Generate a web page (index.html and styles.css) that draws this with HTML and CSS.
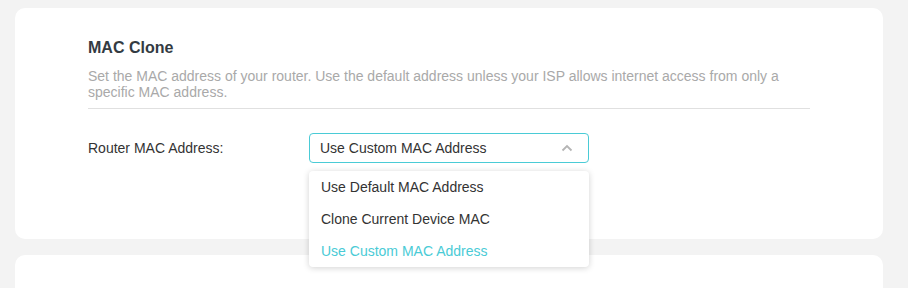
FILE: index.html
```
<!DOCTYPE html>
<html>
<head>
<meta charset="utf-8">
<link rel="stylesheet" href="styles.css">
</head>
<body>
<div class="page">
  <section class="card">
    <h2 class="title">MAC Clone</h2>
    <p class="desc">Set the MAC address of your router. Use the default address unless your ISP allows internet access from only a specific MAC address.</p>
    <div class="row">
      <label class="label">Router MAC Address:</label>
      <div class="select-wrap">
        <div class="select">
          <span>Use Custom MAC Address</span>
          <svg class="chev" width="12" height="8" viewBox="0 0 12 8"><path d="M1.5 6.5 L6 2 L10.5 6.5" fill="none" stroke="#b5b5b5" stroke-width="1.8"/></svg>
        </div>
        <ul class="menu">
          <li>Use Default MAC Address</li>
          <li>Clone Current Device MAC</li>
          <li class="active">Use Custom MAC Address</li>
        </ul>
      </div>
    </div>
  </section>
  <section class="card card2"></section>
</div>
</body>
</html>
```
FILE: styles.css
```
html, body { margin: 0; padding: 0; }
body {
  background: #f3f3f3;
  font-family: "Liberation Sans", Arial, sans-serif;
  width: 908px;
  height: 288px;
  overflow: hidden;
}
.page {
  padding: 8px 25px 0 15px;
  display: flex;
  flex-direction: column;
  gap: 16px;
}
.card {
  background: #fff;
  border-radius: 10px;
  padding: 30px 73px 0 73px;
  height: 201px;
}
.card2 { height: 33px; padding: 0; border-radius: 10px 10px 0 0; }
.title {
  margin: 0 0 10px 0;
  font-size: 16px;
  line-height: 20px;
  font-weight: bold;
  color: #333b42;
}
.desc {
  margin: 0;
  font-size: 14px;
  line-height: 16px;
  color: #a9a9a9;
  padding-bottom: 8px;
  border-bottom: 1px solid #e0e0e0;
}
.row {
  display: flex;
  align-items: center;
  margin-top: 24px;
}
.label {
  width: 221px;
  font-size: 14px;
  color: #333;
}
.select-wrap {
  position: relative;
  width: 280px;
}
.select {
  box-sizing: border-box;
  height: 30px;
  border: 1px solid #4acbd6;
  border-radius: 4px;
  display: flex;
  align-items: center;
  justify-content: space-between;
  padding: 0 15px 0 10px;
  font-size: 14px;
  color: #333;
}
.chev { display: block; }
.menu {
  position: absolute;
  top: 38px;
  left: 0;
  width: 280px;
  margin: 0;
  padding: 0;
  list-style: none;
  background: #fff;
  border-radius: 4px;
  box-shadow: 0 1px 6px rgba(0,0,0,0.18);
  z-index: 5;
}
.menu li {
  height: 32px;
  line-height: 32px;
  padding-left: 12px;
  font-size: 14px;
  color: #333;
}
.menu li.active { color: #4acbd6; }
```
